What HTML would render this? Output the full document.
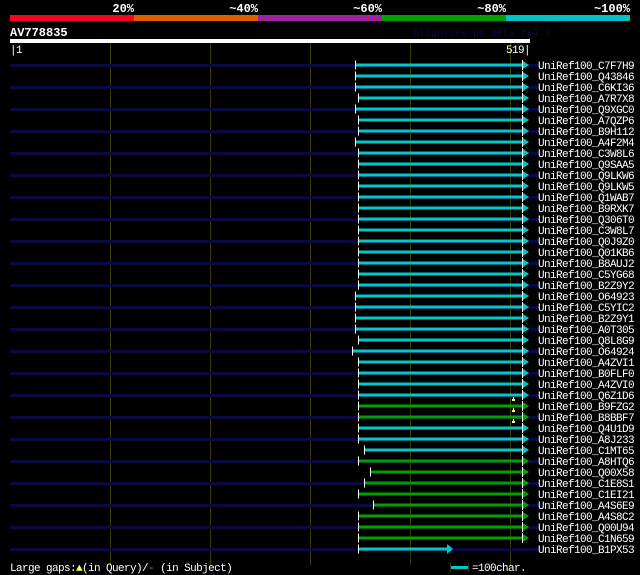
<!DOCTYPE html>
<html><head><meta charset="utf-8"><style>
html,body{margin:0;padding:0;background:#000;}
svg{display:block}
text{font-family:"Liberation Mono",monospace;}
</style></head><body>
<svg width="640" height="575" viewBox="0 0 640 575" xmlns="http://www.w3.org/2000/svg">
<rect width="640" height="575" fill="#000"/>
<g font-weight="bold" font-size="12" fill="#fff" text-anchor="end">
<text x="134" y="12">20%</text><text x="258" y="12">~40%</text><text x="382" y="12">~60%</text><text x="506" y="12">~80%</text><text x="630" y="12">~100%</text>
</g>
<rect x="10" y="15" width="124" height="6" fill="#ff0022"/>
<rect x="134" y="15" width="124" height="6" fill="#e06000"/>
<rect x="258" y="15" width="124" height="6" fill="#a020a0"/>
<rect x="382" y="15" width="124" height="6" fill="#00a000"/>
<rect x="506" y="15" width="124" height="6" fill="#00c0c8"/>
<text x="10" y="36" font-size="12" font-weight="bold" fill="#fff">AV778835</text>
<text x="413" y="36" font-size="10" fill="#0a0a40">AlignView.pm Beta rel.7</text>
<rect x="10" y="39" width="520" height="4" fill="#fff"/>
<g fill="#3a3a00">
<rect x="110" y="43" width="1" height="522"/><rect x="210" y="43" width="1" height="522"/><rect x="310" y="43" width="1" height="522"/><rect x="410" y="43" width="1" height="522"/><rect x="510" y="43" width="1" height="522"/>
</g>
<text x="10" y="53" font-size="11" letter-spacing="-0.6" fill="#fff">|1</text>
<text x="530" y="53" font-size="11" letter-spacing="-0.6" fill="#fff" text-anchor="end">519|</text>
<g fill="#0a0a40">
<rect x="10" y="64" width="530" height="3"/><rect x="10" y="86" width="530" height="3"/><rect x="10" y="108" width="530" height="3"/><rect x="10" y="130" width="530" height="3"/><rect x="10" y="152" width="530" height="3"/><rect x="10" y="174" width="530" height="3"/><rect x="10" y="196" width="530" height="3"/><rect x="10" y="218" width="530" height="3"/><rect x="10" y="240" width="530" height="3"/><rect x="10" y="262" width="530" height="3"/><rect x="10" y="284" width="530" height="3"/><rect x="10" y="306" width="530" height="3"/><rect x="10" y="328" width="530" height="3"/><rect x="10" y="350" width="530" height="3"/><rect x="10" y="372" width="530" height="3"/><rect x="10" y="394" width="530" height="3"/><rect x="10" y="416" width="530" height="3"/><rect x="10" y="438" width="530" height="3"/><rect x="10" y="460" width="530" height="3"/><rect x="10" y="482" width="530" height="3"/><rect x="10" y="504" width="530" height="3"/><rect x="10" y="526" width="530" height="3"/><rect x="10" y="548" width="530" height="3"/>
</g>
<g font-size="11" letter-spacing="-0.6" fill="#fff">
<g transform="translate(0,65)"><rect x="355" y="-1.5" width="167" height="3" fill="#00c8c8"/><rect x="355" y="-4.5" width="1" height="9" fill="#fff"/><rect x="522" y="-5" width="1" height="10"/><polygon points="523,-4 529,0 523,4" fill="#00c8c8"/><text x="538" y="4">UniRef100_C7F7H9</text></g>
<g transform="translate(0,76)"><rect x="355" y="-1.5" width="167" height="3" fill="#00c8c8"/><rect x="355" y="-4.5" width="1" height="9" fill="#fff"/><rect x="522" y="-5" width="1" height="10"/><polygon points="523,-4 529,0 523,4" fill="#00c8c8"/><text x="538" y="4">UniRef100_Q43846</text></g>
<g transform="translate(0,87)"><rect x="355" y="-1.5" width="167" height="3" fill="#00c8c8"/><rect x="355" y="-4.5" width="1" height="9" fill="#fff"/><rect x="522" y="-5" width="1" height="10"/><polygon points="523,-4 529,0 523,4" fill="#00c8c8"/><text x="538" y="4">UniRef100_C6KI36</text></g>
<g transform="translate(0,98)"><rect x="358" y="-1.5" width="164" height="3" fill="#00c8c8"/><rect x="358" y="-4.5" width="1" height="9" fill="#fff"/><rect x="522" y="-5" width="1" height="10"/><polygon points="523,-4 529,0 523,4" fill="#00c8c8"/><text x="538" y="4">UniRef100_A7R7X8</text></g>
<g transform="translate(0,109)"><rect x="355" y="-1.5" width="167" height="3" fill="#00c8c8"/><rect x="355" y="-4.5" width="1" height="9" fill="#fff"/><rect x="522" y="-5" width="1" height="10"/><polygon points="523,-4 529,0 523,4" fill="#00c8c8"/><text x="538" y="4">UniRef100_Q9XGC0</text></g>
<g transform="translate(0,120)"><rect x="358" y="-1.5" width="164" height="3" fill="#00c8c8"/><rect x="358" y="-4.5" width="1" height="9" fill="#fff"/><rect x="522" y="-5" width="1" height="10"/><polygon points="523,-4 529,0 523,4" fill="#00c8c8"/><text x="538" y="4">UniRef100_A7QZP6</text></g>
<g transform="translate(0,131)"><rect x="358" y="-1.5" width="164" height="3" fill="#00c8c8"/><rect x="358" y="-4.5" width="1" height="9" fill="#fff"/><rect x="522" y="-5" width="1" height="10"/><polygon points="523,-4 529,0 523,4" fill="#00c8c8"/><text x="538" y="4">UniRef100_B9H112</text></g>
<g transform="translate(0,142)"><rect x="355" y="-1.5" width="167" height="3" fill="#00c8c8"/><rect x="355" y="-4.5" width="1" height="9" fill="#fff"/><rect x="522" y="-5" width="1" height="10"/><polygon points="523,-4 529,0 523,4" fill="#00c8c8"/><text x="538" y="4">UniRef100_A4F2M4</text></g>
<g transform="translate(0,153)"><rect x="358" y="-1.5" width="164" height="3" fill="#00c8c8"/><rect x="358" y="-4.5" width="1" height="9" fill="#fff"/><rect x="522" y="-5" width="1" height="10"/><polygon points="523,-4 529,0 523,4" fill="#00c8c8"/><text x="538" y="4">UniRef100_C3W8L6</text></g>
<g transform="translate(0,164)"><rect x="358" y="-1.5" width="164" height="3" fill="#00c8c8"/><rect x="358" y="-4.5" width="1" height="9" fill="#fff"/><rect x="522" y="-5" width="1" height="10"/><polygon points="523,-4 529,0 523,4" fill="#00c8c8"/><text x="538" y="4">UniRef100_Q9SAA5</text></g>
<g transform="translate(0,175)"><rect x="358" y="-1.5" width="164" height="3" fill="#00c8c8"/><rect x="358" y="-4.5" width="1" height="9" fill="#fff"/><rect x="522" y="-5" width="1" height="10"/><polygon points="523,-4 529,0 523,4" fill="#00c8c8"/><text x="538" y="4">UniRef100_Q9LKW6</text></g>
<g transform="translate(0,186)"><rect x="358" y="-1.5" width="164" height="3" fill="#00c8c8"/><rect x="358" y="-4.5" width="1" height="9" fill="#fff"/><rect x="522" y="-5" width="1" height="10"/><polygon points="523,-4 529,0 523,4" fill="#00c8c8"/><text x="538" y="4">UniRef100_Q9LKW5</text></g>
<g transform="translate(0,197)"><rect x="358" y="-1.5" width="164" height="3" fill="#00c8c8"/><rect x="358" y="-4.5" width="1" height="9" fill="#fff"/><rect x="522" y="-5" width="1" height="10"/><polygon points="523,-4 529,0 523,4" fill="#00c8c8"/><text x="538" y="4">UniRef100_Q1WAB7</text></g>
<g transform="translate(0,208)"><rect x="358" y="-1.5" width="164" height="3" fill="#00c8c8"/><rect x="358" y="-4.5" width="1" height="9" fill="#fff"/><rect x="522" y="-5" width="1" height="10"/><polygon points="523,-4 529,0 523,4" fill="#00c8c8"/><text x="538" y="4">UniRef100_B9RXK7</text></g>
<g transform="translate(0,219)"><rect x="358" y="-1.5" width="164" height="3" fill="#00c8c8"/><rect x="358" y="-4.5" width="1" height="9" fill="#fff"/><rect x="522" y="-5" width="1" height="10"/><polygon points="523,-4 529,0 523,4" fill="#00c8c8"/><text x="538" y="4">UniRef100_Q306T0</text></g>
<g transform="translate(0,230)"><rect x="358" y="-1.5" width="164" height="3" fill="#00c8c8"/><rect x="358" y="-4.5" width="1" height="9" fill="#fff"/><rect x="522" y="-5" width="1" height="10"/><polygon points="523,-4 529,0 523,4" fill="#00c8c8"/><text x="538" y="4">UniRef100_C3W8L7</text></g>
<g transform="translate(0,241)"><rect x="358" y="-1.5" width="164" height="3" fill="#00c8c8"/><rect x="358" y="-4.5" width="1" height="9" fill="#fff"/><rect x="522" y="-5" width="1" height="10"/><polygon points="523,-4 529,0 523,4" fill="#00c8c8"/><text x="538" y="4">UniRef100_Q0J9Z0</text></g>
<g transform="translate(0,252)"><rect x="358" y="-1.5" width="164" height="3" fill="#00c8c8"/><rect x="358" y="-4.5" width="1" height="9" fill="#fff"/><rect x="522" y="-5" width="1" height="10"/><polygon points="523,-4 529,0 523,4" fill="#00c8c8"/><text x="538" y="4">UniRef100_Q01KB6</text></g>
<g transform="translate(0,263)"><rect x="358" y="-1.5" width="164" height="3" fill="#00c8c8"/><rect x="358" y="-4.5" width="1" height="9" fill="#fff"/><rect x="522" y="-5" width="1" height="10"/><polygon points="523,-4 529,0 523,4" fill="#00c8c8"/><text x="538" y="4">UniRef100_B8AUJ2</text></g>
<g transform="translate(0,274)"><rect x="358" y="-1.5" width="164" height="3" fill="#00c8c8"/><rect x="358" y="-4.5" width="1" height="9" fill="#fff"/><rect x="522" y="-5" width="1" height="10"/><polygon points="523,-4 529,0 523,4" fill="#00c8c8"/><text x="538" y="4">UniRef100_C5YG68</text></g>
<g transform="translate(0,285)"><rect x="358" y="-1.5" width="164" height="3" fill="#00c8c8"/><rect x="358" y="-4.5" width="1" height="9" fill="#fff"/><rect x="522" y="-5" width="1" height="10"/><polygon points="523,-4 529,0 523,4" fill="#00c8c8"/><text x="538" y="4">UniRef100_B2Z9Y2</text></g>
<g transform="translate(0,296)"><rect x="355" y="-1.5" width="167" height="3" fill="#00c8c8"/><rect x="355" y="-4.5" width="1" height="9" fill="#fff"/><rect x="522" y="-5" width="1" height="10"/><polygon points="523,-4 529,0 523,4" fill="#00c8c8"/><text x="538" y="4">UniRef100_O64923</text></g>
<g transform="translate(0,307)"><rect x="355" y="-1.5" width="167" height="3" fill="#00c8c8"/><rect x="355" y="-4.5" width="1" height="9" fill="#fff"/><rect x="522" y="-5" width="1" height="10"/><polygon points="523,-4 529,0 523,4" fill="#00c8c8"/><text x="538" y="4">UniRef100_C5YIC2</text></g>
<g transform="translate(0,318)"><rect x="355" y="-1.5" width="167" height="3" fill="#00c8c8"/><rect x="355" y="-4.5" width="1" height="9" fill="#fff"/><rect x="522" y="-5" width="1" height="10"/><polygon points="523,-4 529,0 523,4" fill="#00c8c8"/><text x="538" y="4">UniRef100_B2Z9Y1</text></g>
<g transform="translate(0,329)"><rect x="355" y="-1.5" width="167" height="3" fill="#00c8c8"/><rect x="355" y="-4.5" width="1" height="9" fill="#fff"/><rect x="522" y="-5" width="1" height="10"/><polygon points="523,-4 529,0 523,4" fill="#00c8c8"/><text x="538" y="4">UniRef100_A0T305</text></g>
<g transform="translate(0,340)"><rect x="358" y="-1.5" width="164" height="3" fill="#00c8c8"/><rect x="358" y="-4.5" width="1" height="9" fill="#fff"/><rect x="522" y="-5" width="1" height="10"/><polygon points="523,-4 529,0 523,4" fill="#00c8c8"/><text x="538" y="4">UniRef100_Q8L8G9</text></g>
<g transform="translate(0,351)"><rect x="352" y="-1.5" width="170" height="3" fill="#00c8c8"/><rect x="352" y="-4.5" width="1" height="9" fill="#fff"/><rect x="522" y="-5" width="1" height="10"/><polygon points="523,-4 529,0 523,4" fill="#00c8c8"/><text x="538" y="4">UniRef100_O64924</text></g>
<g transform="translate(0,362)"><rect x="358" y="-1.5" width="164" height="3" fill="#00c8c8"/><rect x="358" y="-4.5" width="1" height="9" fill="#fff"/><rect x="522" y="-5" width="1" height="10"/><polygon points="523,-4 529,0 523,4" fill="#00c8c8"/><text x="538" y="4">UniRef100_A4ZVI1</text></g>
<g transform="translate(0,373)"><rect x="358" y="-1.5" width="164" height="3" fill="#00c8c8"/><rect x="358" y="-4.5" width="1" height="9" fill="#fff"/><rect x="522" y="-5" width="1" height="10"/><polygon points="523,-4 529,0 523,4" fill="#00c8c8"/><text x="538" y="4">UniRef100_B0FLF0</text></g>
<g transform="translate(0,384)"><rect x="358" y="-1.5" width="164" height="3" fill="#00c8c8"/><rect x="358" y="-4.5" width="1" height="9" fill="#fff"/><rect x="522" y="-5" width="1" height="10"/><polygon points="523,-4 529,0 523,4" fill="#00c8c8"/><text x="538" y="4">UniRef100_A4ZVI0</text></g>
<g transform="translate(0,395)"><rect x="358" y="-1.5" width="164" height="3" fill="#00c8c8"/><rect x="358" y="-4.5" width="1" height="9" fill="#fff"/><rect x="522" y="-5" width="1" height="10"/><polygon points="523,-4 529,0 523,4" fill="#00c8c8"/><text x="538" y="4">UniRef100_Q6Z1D6</text></g>
<g transform="translate(0,406)"><rect x="358" y="-1.5" width="164" height="3" fill="#00a000"/><rect x="358" y="-4.5" width="1" height="9" fill="#fff"/><rect x="522" y="-5" width="1" height="10"/><polygon points="523,-4 529,0 523,4" fill="#00a000"/><text x="538" y="4">UniRef100_B9FZG2</text></g>
<g transform="translate(0,417)"><rect x="358" y="-1.5" width="164" height="3" fill="#00a000"/><rect x="358" y="-4.5" width="1" height="9" fill="#fff"/><rect x="522" y="-5" width="1" height="10"/><polygon points="523,-4 529,0 523,4" fill="#00a000"/><text x="538" y="4">UniRef100_B8BBF7</text></g>
<g transform="translate(0,428)"><rect x="358" y="-1.5" width="164" height="3" fill="#00c8c8"/><rect x="358" y="-4.5" width="1" height="9" fill="#fff"/><rect x="522" y="-5" width="1" height="10"/><polygon points="523,-4 529,0 523,4" fill="#00c8c8"/><text x="538" y="4">UniRef100_Q4U1D9</text></g>
<g transform="translate(0,439)"><rect x="358" y="-1.5" width="164" height="3" fill="#00c8c8"/><rect x="358" y="-4.5" width="1" height="9" fill="#fff"/><rect x="522" y="-5" width="1" height="10"/><polygon points="523,-4 529,0 523,4" fill="#00c8c8"/><text x="538" y="4">UniRef100_A8J233</text></g>
<g transform="translate(0,450)"><rect x="364" y="-1.5" width="158" height="3" fill="#00c8c8"/><rect x="364" y="-4.5" width="1" height="9" fill="#fff"/><rect x="522" y="-5" width="1" height="10"/><polygon points="523,-4 529,0 523,4" fill="#00c8c8"/><text x="538" y="4">UniRef100_C1MT65</text></g>
<g transform="translate(0,461)"><rect x="358" y="-1.5" width="164" height="3" fill="#00a000"/><rect x="358" y="-4.5" width="1" height="9" fill="#fff"/><rect x="522" y="-5" width="1" height="10"/><polygon points="523,-4 529,0 523,4" fill="#00a000"/><text x="538" y="4">UniRef100_A8HTQ6</text></g>
<g transform="translate(0,472)"><rect x="370" y="-1.5" width="152" height="3" fill="#00a000"/><rect x="370" y="-4.5" width="1" height="9" fill="#fff"/><rect x="522" y="-5" width="1" height="10"/><polygon points="523,-4 529,0 523,4" fill="#00a000"/><text x="538" y="4">UniRef100_Q00X58</text></g>
<g transform="translate(0,483)"><rect x="364" y="-1.5" width="158" height="3" fill="#00a000"/><rect x="364" y="-4.5" width="1" height="9" fill="#fff"/><rect x="522" y="-5" width="1" height="10"/><polygon points="523,-4 529,0 523,4" fill="#00a000"/><text x="538" y="4">UniRef100_C1E8S1</text></g>
<g transform="translate(0,494)"><rect x="358" y="-1.5" width="164" height="3" fill="#00a000"/><rect x="358" y="-4.5" width="1" height="9" fill="#fff"/><rect x="522" y="-5" width="1" height="10"/><polygon points="523,-4 529,0 523,4" fill="#00a000"/><text x="538" y="4">UniRef100_C1EI21</text></g>
<g transform="translate(0,505)"><rect x="373" y="-1.5" width="149" height="3" fill="#00a000"/><rect x="373" y="-4.5" width="1" height="9" fill="#fff"/><rect x="522" y="-5" width="1" height="10"/><polygon points="523,-4 529,0 523,4" fill="#00a000"/><text x="538" y="4">UniRef100_A4S6E9</text></g>
<g transform="translate(0,516)"><rect x="358" y="-1.5" width="164" height="3" fill="#00a000"/><rect x="358" y="-4.5" width="1" height="9" fill="#fff"/><rect x="522" y="-5" width="1" height="10"/><polygon points="523,-4 529,0 523,4" fill="#00a000"/><text x="538" y="4">UniRef100_A4S8C2</text></g>
<g transform="translate(0,527)"><rect x="358" y="-1.5" width="164" height="3" fill="#00a000"/><rect x="358" y="-4.5" width="1" height="9" fill="#fff"/><rect x="522" y="-5" width="1" height="10"/><polygon points="523,-4 529,0 523,4" fill="#00a000"/><text x="538" y="4">UniRef100_Q00U94</text></g>
<g transform="translate(0,538)"><rect x="358" y="-1.5" width="164" height="3" fill="#00a000"/><rect x="358" y="-4.5" width="1" height="9" fill="#fff"/><rect x="522" y="-5" width="1" height="10"/><polygon points="523,-4 529,0 523,4" fill="#00a000"/><text x="538" y="4">UniRef100_C1N659</text></g>
<g transform="translate(0,549)"><rect x="358" y="-1.5" width="89" height="3" fill="#00c8c8"/><rect x="358" y="-4.5" width="1" height="9" fill="#fff"/><polygon points="447,-5 453,0 447,5" fill="#00c8c8"/><text x="538" y="4">UniRef100_B1PX53</text></g>
</g>
<g fill="#ffff66">
<rect x="512" y="399" width="3" height="2"/><rect x="513" y="397" width="1" height="2"/>
<rect x="512" y="410" width="3" height="2"/><rect x="513" y="408" width="1" height="2"/>
<rect x="512" y="421" width="3" height="2"/><rect x="513" y="419" width="1" height="2"/>
</g>
<text x="10" y="571" font-size="11" letter-spacing="-0.6" fill="#fff">Large gaps:<tspan fill="#ffff66">▲</tspan>(in Query)/<tspan fill="#00c8c8">-</tspan> (in Subject)</text>
<rect x="450" y="563" width="1" height="9" fill="#3a3a00"/>
<rect x="451" y="566" width="17" height="3" fill="#00c8c8"/>
<rect x="468" y="563" width="1" height="9" fill="#3a3a00"/>
<text x="472" y="571" font-size="11" letter-spacing="-0.6" fill="#fff">=100char.</text>
</svg>
</body></html>
